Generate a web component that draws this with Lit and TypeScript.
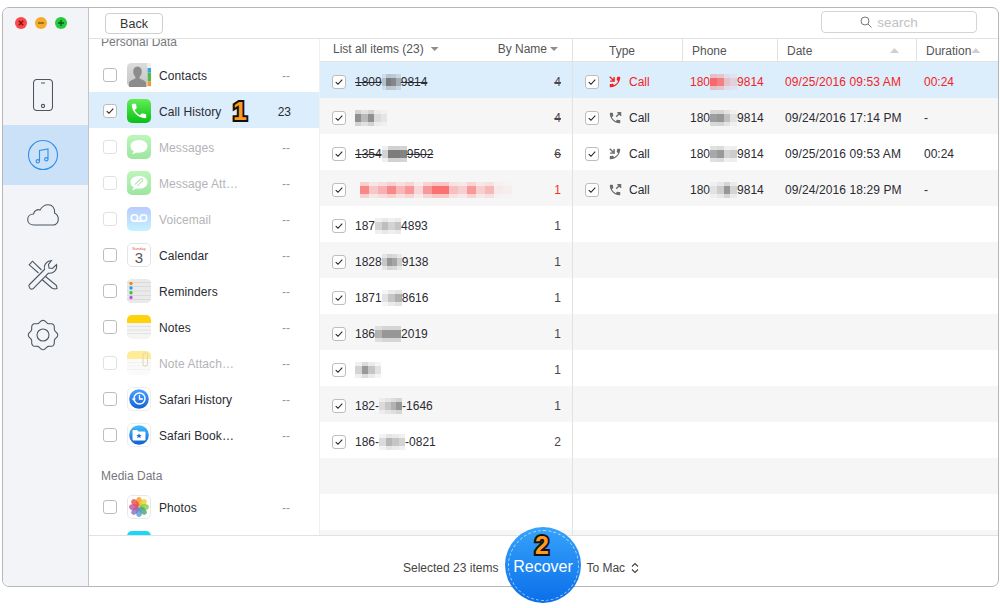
import { LitElement, html, css, svg } from "lit";
import { customElement } from "lit/decorators.js";

const HANDSET = "M6.6 10.8c1.4 2.8 3.8 5.1 6.6 6.6l2.2-2.2c.3-.3.7-.4 1-.2 1.1.4 2.3.6 3.6.6.6 0 1 .4 1 1V20c0 .6-.4 1-1 1C10.6 21 3 13.4 3 4c0-.6.4-1 1-1h3.5c.6 0 1 .4 1 1 0 1.3.2 2.5.6 3.6.1.3 0 .7-.2 1l-2.3 2.2z";

function gearPath() {
  const pts: string[] = [];
  for (let i = 0; i < 96; i++) {
    const t = (i / 96) * Math.PI * 2;
    const r = 13.6 + 1.1 * Math.cos(8 * t);
    pts.push(`${(16 + r * Math.sin(t)).toFixed(2)} ${(16 - r * Math.cos(t)).toFixed(2)}`);
  }
  return "M" + pts.join("L") + "Z";
}

const check = (on: boolean) => html`<span class="cb">${on
  ? html`<svg viewBox="0 0 14 14" width="12" height="12"><path d="M3.2 7.2 5.8 9.6 10.8 4.2" fill="none" stroke="#222" stroke-width="1.2"/></svg>`
  : ""}</span>`;

const blur = (w: number, cells: number[], rgb = "110,110,110") => {
  const cw = w / cells.length;
  return html`<span class="blur" style="width:${w}px">${cells.map(
    (v) => html`<i class="cell" style="width:${cw}px;background:linear-gradient(rgba(${rgb},${v * 0.35}) 0 25%,rgba(${rgb},${v}) 25% 75%,rgba(${rgb},${v * 0.35}) 75%)"></i>`
  )}</span>`;
};

const gloss = (id: string, a: string, b: string) => svg`<defs><linearGradient id=${id} x1="0" y1="0" x2="0" y2="1"><stop offset="0" stop-color=${a}/><stop offset="1" stop-color=${b}/></linearGradient></defs>`;

const bubble = svg`<path d="M12 5C7 5 3.5 7.8 3.5 11.3c0 2.1 1.3 3.9 3.2 5-.2 1-.8 2-1.7 2.7 1.7 0 3.2-.6 4.3-1.5.9.2 1.8.3 2.7.3 5 0 8.5-2.9 8.5-6.5S17 5 12 5z" fill="#fff"/>`;
const paper = svg`<rect width="24" height="24" rx="5" fill="#f4f4f4"/><path d="M0 11.5H24M0 15H24M0 18.5H24" stroke="#ddd" stroke-width=".8"/>`;

const appIcons: Record<string, any> = {
  contacts: svg`${gloss("c1", "#dcdcdc", "#c4c4c4")}<rect width="24" height="24" rx="4.5" fill="url(#c1)"/><rect x="20" y="0" width="4" height="24" fill="#eee"/><rect x="20.5" y="5" width="3.5" height="4.5" fill="#3aa3e0"/><rect x="20.5" y="9.5" width="3.5" height="4.5" fill="#57b84a"/><rect x="20.5" y="14" width="3.5" height="4.5" fill="#5ab55a"/><rect x="20.5" y="18.5" width="3.5" height="4.5" fill="#ee9a2c"/><path d="M10.5 3.5c2.8 0 4.3 2.2 4.3 4.9 0 2.3-1 4.3-2.2 5.3v1.6c0 .8 5.4 2 6.4 4.2v4.5H2v-4.5c1-2.2 6.4-3.4 6.4-4.2v-1.6C7.2 12.7 6.2 10.7 6.2 8.4c0-2.7 1.5-4.9 4.3-4.9z" fill="#8c8c8c"/>`,
  phone: svg`${gloss("p1", "#62ee55", "#0abf15")}<rect width="24" height="24" rx="5" fill="url(#p1)"/><g transform="translate(2.4 2.4) scale(.8)"><path d=${HANDSET} fill="#fff"/></g>`,
  msg: svg`${gloss("m1", "#66ea5c", "#17c421")}<rect width="24" height="24" rx="5" fill="url(#m1)"/>${bubble}`,
  att: svg`${gloss("m2", "#66ea5c", "#17c421")}<rect width="24" height="24" rx="5" fill="url(#m2)"/>${bubble}<path d="M9 14.5 14.5 9c1.5-1.2 3 .3 1.8 1.8l-5 5" transform="translate(-1 -1)" fill="none" stroke="#58c860" stroke-width="1.1"/>`,
  voice: svg`${gloss("v1", "#5a84ff", "#76e0ff")}<rect width="24" height="24" rx="5" fill="url(#v1)"/><circle cx="7.5" cy="11" r="3.2" fill="none" stroke="#fff" stroke-width="1.6"/><circle cx="16.5" cy="11" r="3.2" fill="none" stroke="#fff" stroke-width="1.6"/><path d="M7.5 14.2H16.5" stroke="#fff" stroke-width="1.6"/>`,
  cal: svg`<rect x=".5" y=".5" width="23" height="23" rx="4.5" fill="#fff" stroke="#e4e4e4"/><text x="12" y="6.5" text-anchor="middle" font-size="4" fill="#e4574c" font-family="Liberation Sans, sans-serif">Sunday</text><text x="12" y="20" text-anchor="middle" font-size="15" fill="#555" font-family="Liberation Sans, sans-serif">3</text>`,
  rem: svg`<rect width="24" height="24" rx="4.5" fill="#eaeaea"/><path d="M0 3.5H24M0 7.5H24M0 12H24M0 16.5H24M0 20.5H24" stroke="#d5d5d5" stroke-width=".8"/><circle cx="4" cy="4.5" r="1.7" fill="#f5871f"/><circle cx="4" cy="9" r="1.7" fill="#1f9df5"/><circle cx="4" cy="13.8" r="1.7" fill="#3fc43f"/><circle cx="4" cy="18.5" r="1.7" fill="#c04fe0"/>`,
  notes: svg`${paper}<path d="M0 8V5a5 5 0 0 1 5-5H19a5 5 0 0 1 5 5V8z" fill="#ffd20a"/>`,
  noteatt: svg`${paper}<path d="M0 8V5a5 5 0 0 1 5-5H19a5 5 0 0 1 5 5V8z" fill="#ffd20a"/><rect x="16" y="2" width="4.5" height="13" rx="2.2" fill="none" stroke="#c9a34a" stroke-width="1.1"/>`,
  safhist: svg`${gloss("s1", "#4aa2ff", "#1560d8")}<rect x=".5" y=".5" width="23" height="23" rx="4.5" fill="#fff" stroke="#eee"/><circle cx="12" cy="12" r="9.8" fill="url(#s1)"/><circle cx="12.5" cy="11.5" r="5.5" fill="none" stroke="#fff" stroke-width="1.4"/><path d="M12.5 8V12H16" fill="none" stroke="#fff" stroke-width="1.3"/><path d="M4.5 11.5 7 14 9 11.5z" fill="#fff"/>`,
  safbook: svg`${gloss("s2", "#45c1ff", "#0f5cd0")}<rect x=".5" y=".5" width="23" height="23" rx="4.5" fill="#fff" stroke="#eee"/><circle cx="12" cy="12" r="9.8" fill="url(#s2)"/><path d="M5.5 8a1 1 0 0 1 1-1H10l1.5 1.5h6a1 1 0 0 1 1 1V16.5a1 1 0 0 1-1 1h-11a1 1 0 0 1-1-1z" fill="#fff"/><path d="M12 10.2l.8 1.7 1.8.2-1.3 1.2.4 1.8-1.7-.9-1.7.9.4-1.8-1.3-1.2 1.8-.2z" fill="#1f6fd8"/>`,
  photos: svg`<rect x=".5" y=".5" width="23" height="23" rx="4.5" fill="#fff" stroke="#e8e8e8"/>${["#f5a11f", "#e8d22c", "#8fc94a", "#45ac6d", "#5b9bd6", "#8474c4", "#c2559e", "#e8504a"].map(
    (c, i) => svg`<ellipse cx="12" cy="6.7" rx="3" ry="4.7" fill=${c} fill-opacity=".82" transform="rotate(${i * 45} 12 12)"/>`
  )}`,
  cyan: svg`<rect width="24" height="24" rx="5" fill="#1cd6f8"/>`,
};

const icon = (k: string) => html`<svg class="app" viewBox="0 0 24 24" width="24" height="24">${appIcons[k]}</svg>`;

type Cat = { n: string; i: string; c?: string; off?: boolean; on?: boolean };
const CATS1: Cat[] = [
  { n: "Contacts", i: "contacts" },
  { n: "Call History", i: "phone", c: "23", on: true },
  { n: "Messages", i: "msg", off: true },
  { n: "Message Att…", i: "att", off: true },
  { n: "Voicemail", i: "voice", off: true },
  { n: "Calendar", i: "cal" },
  { n: "Reminders", i: "rem" },
  { n: "Notes", i: "notes" },
  { n: "Note Attach…", i: "noteatt", off: true },
  { n: "Safari History", i: "safhist" },
  { n: "Safari Book…", i: "safbook" },
];

type Item = { a?: string; b?: number; cells?: number[]; z?: string; n: string; strike?: boolean; red?: boolean; rgb?: string; lead?: number };
const ITEMS: Item[] = [
  { a: "1809", b: 19, cells: [0.35, 0.9, 0.8, 0.5], z: "9814", n: "4", strike: true },
  { b: 32, cells: [0.75, 0.45, 0.75, 0.2, 0.12], n: "4", strike: true },
  { a: "1354", b: 25, cells: [0.3, 0.9, 0.9, 0.85], z: "9502", n: "6", strike: true },
  { lead: 5, b: 152, cells: [0.7, 0.3, 0.45, 0.7, 0.4, 0.6, 0.2, 0.6, 0.85, 0.85, 0.35, 0.25, 0.6, 0.25, 0.4, 0.08, 0.05], n: "1", red: true, rgb: "250,90,90" },
  { a: "187", b: 26, cells: [0.3, 0.45, 0.3, 0.4], z: "4893", n: "1" },
  { a: "1828", b: 20, cells: [0.35, 0.7, 0.6, 0.3], z: "9138", n: "1" },
  { a: "1871", b: 20, cells: [0.2, 0.4, 0.55], z: "8616", n: "1" },
  { a: "186", b: 26, cells: [0.5, 0.7, 0.7, 0.7], z: "2019", n: "1" },
  { b: 26, cells: [0.3, 0.7, 0.4, 0.2], n: "1" },
  { a: "182-", b: 23, cells: [0.2, 0.35, 0.5, 0.7], z: "-1646", n: "1" },
  { a: "186-", b: 26, cells: [0.25, 0.5, 0.4, 0.3], z: "-0821", n: "2" },
];

const CALLS = [
  { dir: "in", p: ["180", 27, [0.9, 0.75, 0.3, 0.2], "9814"], d: "09/25/2016 09:53 AM", t: "00:24", red: true, rgb: "250,90,90" },
  { dir: "out", p: ["180", 27, [0.65, 0.7, 0.4, 0.15], "9814"], d: "09/24/2016 17:14 PM", t: "-" },
  { dir: "in", p: ["180", 27, [0.6, 0.7, 0.3, 0.35], "9814"], d: "09/25/2016 09:53 AM", t: "00:24" },
  { dir: "out", p: ["180", 27, [0.15, 0.3, 0.7, 0.25], "9814"], d: "09/24/2016 18:29 PM", t: "-" },
];

@customElement("app-root")
export class AppRoot extends LitElement {
  static styles = css`
    :host { display: block; width: 1000px; height: 608px; position: relative; background: #fff; overflow: hidden;
      font-family: "Liberation Sans", Arial, sans-serif; font-size: 12px; color: #2b2b33; }
    .window { position: absolute; left: 2px; top: 7px; width: 997px; height: 580px; box-sizing: border-box; border: 1px solid #b6b6b6;
      border-radius: 7px; display: flex; overflow: hidden; background: #fff; }
    .side { width: 86px; flex: none; box-sizing: border-box; background: #f2f4f8; border-right: 1px solid #c4c4c4; display: flex; flex-direction: column; }
    .lights { height: 57px; flex: none; display: flex; gap: 8px; padding: 9px 0 0 12px; box-sizing: border-box; }
    .lights svg { display: block; }
    .nav { height: 60px; flex: none; display: flex; align-items: center; justify-content: center; padding-right: 5px; }
    .nav.sel { background: #cbe1f7; }
    .nav svg { display: block; fill: none; stroke: #4d5660; stroke-width: 1.1; }
    .main { flex: 1; min-width: 0; display: flex; flex-direction: column; }
    .top { height: 31px; flex: none; box-sizing: border-box; border-bottom: 1px solid #e2e2e2; display: flex; align-items: flex-start; justify-content: space-between; padding: 2px 21px 0 16px; }
    .back { margin-top: 3px; width: 58px; height: 21px; box-sizing: border-box; border: 1px solid #cfcfcf; border-radius: 4px; font-size: 12.5px; display: flex; align-items: center; justify-content: center; color: #333; }
    .search { margin-top: 1px; width: 156px; height: 22px; box-sizing: border-box; border: 1px solid #d4d4d4; border-radius: 4px; display: flex; align-items: center; justify-content: center; gap: 5px; color: #c2c2c2; font-size: 13.5px; padding-right: 20px; }
    .body { flex: 1; min-height: 0; display: flex; }
    .cats { width: 231px; flex: none; box-sizing: border-box; border-right: 1px solid #f0f0f0; overflow: hidden; }
    .inner { margin-top: -19px; }
    .sec { height: 36px; box-sizing: border-box; padding: 15px 0 0 12px; color: #77777d; line-height: 14px; font-size: 12px; }
    .sec.media { padding-top: 17px; }
    .cat { height: 36px; box-sizing: border-box; padding-top: 2px; display: flex; align-items: center; padding-left: 14px; position: relative; }
    .cat.on { background: #dcedfb; margin-right: -1px; }
    .cat.off { color: #b4b4b8; }
    .cat.off .cb { opacity: .45; }
    .cat.off .app { opacity: .42; }
    .cb { width: 14px; height: 14px; flex: none; box-sizing: border-box; border: 1px solid #bdbdbd; border-radius: 3px; display: flex; align-items: center; justify-content: center; background: #fff; }
    .app { flex: none; display: block; margin: 0 8px 0 10px; }
    .lab { flex: 1; letter-spacing: .08px; padding-top: 2px; }
    .cnt { width: 28px; text-align: right; margin-right: 29px; color: #999; padding-top: 2px; }
    .cat.on .cnt { color: #2b2b33; }
    .step { position: absolute; color: #ff9a1f; font-weight: 700; font-family: "Liberation Sans", sans-serif; -webkit-text-stroke: 4px #111; paint-order: stroke fill; }
    .s1 { left: 144px; top: 6px; font-size: 25px; line-height: 26px; }
    .list { width: 253px; flex: none; box-sizing: border-box; border-right: 1px solid #e2e2e2; display: flex; flex-direction: column; overflow: hidden; }
    .lh { height: 23px; flex: none; box-sizing: border-box; border-bottom: 1px solid #e2e2e2; display: flex; align-items: center; padding: 0 14px 2px 13px; color: #555; justify-content: space-between; }
    .lh span { display: flex; align-items: center; gap: 5px; }
    .caret { width: 8px; height: 4px; background: #8e8e8e; clip-path: polygon(0 0, 100% 0, 50% 100%); display: block; }
    .up { width: 9px; height: 5px; background: #cfcfcf; clip-path: polygon(50% 0, 100% 100%, 0 100%); display: block; }
    .rows { flex: 1; min-height: 0; overflow: hidden; background-image: repeating-linear-gradient(#fff 0 36px, #f6f6f6 36px 72px); }
    .row { height: 36px; box-sizing: border-box; padding: 3px 11px 0 12px; display: flex; align-items: center; }
    .row:nth-child(even), .drow:nth-child(even) { background: #f6f6f6; }
    .row.sel, .drow.sel { background: #dcedfb; }
    .num { flex: 1; margin-left: 9px; white-space: nowrap; display: flex; align-items: center; position: relative; }
    .strike { text-decoration: line-through; }
    .blur { display: inline-flex; height: 16px; flex: none; }
    .cell { display: block; height: 16px; flex: none; }
    .lead { display: inline-block; flex: none; }
    .qty { color: #4a4347; }
    .qty.red { color: #f0341f; }
    .detail { flex: 1; min-width: 0; display: flex; flex-direction: column; }
    .dh { height: 23px; flex: none; box-sizing: border-box; border-bottom: 1px solid #e2e2e2; display: grid; grid-template-columns: 110px 95px 139px 1fr; color: #555; }
    .dh > div { border-right: 1px solid #e2e2e2; padding: 1px 17px 0 9px; display: flex; align-items: center; justify-content: space-between; }
    .dh > div:first-child { padding-left: 36px; }
    .dh > div:last-child { border-right: 0; padding-right: 18px; }
    .drow { height: 36px; box-sizing: border-box; padding-top: 3px; display: grid; grid-template-columns: 110px 95px 139px 1fr; align-items: center; }
    .drow.red { color: #f5231f; }
    .d1 { display: flex; align-items: center; padding-left: 12px; }
    .d1 > svg { margin: 0 7px 0 9px; display: block; flex: none; }
    .dc { padding-left: 7px; display: flex; align-items: center; white-space: nowrap; }
    .date { letter-spacing: .1px; }
    .foot { flex: none; box-sizing: border-box; border-top: 1px solid #e2e2e2; height: 51px; display: flex; align-items: center; padding: 14px 0 0 314px; color: #444; }
    .mac { margin-left: 88px; display: flex; align-items: center; gap: 6px; }
    .mac svg { display: block; }
    .recover { position: absolute; left: 505px; top: 527px; width: 76px; height: 76px; border-radius: 50%; background: linear-gradient(#36a3fb, #0b6ee9); color: #fff; font-size: 16px; display: flex; align-items: center; justify-content: center; padding-top: 3px; box-sizing: border-box; }
    .recover::before { content: ""; position: absolute; inset: 2.5px; border-radius: 50%; border: 1px dashed rgba(255,255,255,.65); }
    .s2 { left: 30px; top: 5px; font-size: 25px; line-height: 26px; }
  `;

  private num(i: Item) {
    return html`<span class="num ${i.strike ? "strike" : ""}">
      ${i.lead ? html`<span class="lead" style="width:${i.lead}px"></span>` : ""}
      ${i.a ?? ""}${i.cells ? blur(i.b!, i.cells, i.rgb) : ""}${i.z ?? ""}
    </span>`;
  }

  private cat(c: Cat) {
    return html`<div class="cat ${c.on ? "on" : ""} ${c.off ? "off" : ""}">
      ${check(!!c.on)}${icon(c.i)}<span class="lab">${c.n}</span><span class="cnt">${c.c ?? "--"}</span>
      ${c.on ? html`<span class="step s1">1</span>` : ""}
    </div>`;
  }

  render() {
    const gear = gearPath();
    return html`
      <div class="window">
        <div class="side">
          <div class="lights">
            <svg width="12" height="12" viewBox="0 0 12 12"><circle cx="6" cy="6" r="6" fill="#f9494a"/><path d="M3.8 3.8 8.2 8.2M8.2 3.8 3.8 8.2" stroke="#7c1414" stroke-width="1.4"/></svg>
            <svg width="12" height="12" viewBox="0 0 12 12"><circle cx="6" cy="6" r="6" fill="#f6ab2e"/><path d="M3 6H9" stroke="#8f5c0e" stroke-width="1.4"/></svg>
            <svg width="12" height="12" viewBox="0 0 12 12"><circle cx="6" cy="6" r="6" fill="#27c93f"/><path d="M3 6H9M6 3V9" stroke="#0d5f17" stroke-width="1.4"/></svg>
          </div>
          <div class="nav"><svg width="20" height="32" viewBox="0 0 20 32"><rect x=".5" y=".5" width="19" height="31" rx="3.5"/><path d="M8 4H12"/><circle cx="10" cy="27" r="1.6"/></svg></div>
          <div class="nav sel"><svg width="32" height="32" viewBox="0 0 32 32" style="stroke:#2f8ff0"><circle cx="16" cy="16" r="14.5"/><path d="M12.5 22V11.5L21 10V20"/><circle cx="10.8" cy="22.3" r="1.7"/><circle cx="19.3" cy="20.3" r="1.7"/></svg></div>
          <div class="nav"><svg width="32" height="22" viewBox="0 0 32 22"><path d="M7 21C3 21 .7 18.5 .7 15.5C.7 12 3.5 10 6.5 10C7.5 6.5 10.5 5 13 6C15 2.5 18 .7 21 .7C25.5 .7 28 4 27.5 9C29.5 10 31.3 12 31.3 15C31.3 18.5 29 21 26 21Z"/></svg></div>
          <div class="nav"><svg width="32" height="32" viewBox="0 0 32 32"><path d="M2.5 25.5 17.5 10.5C16.5 6.5 19 2 24.5 1.5L21.5 5.5 22 9 25.5 9.5 29.5 5.5C30.5 10 27 15 21.5 14.2L6.5 29.3C5.5 30.3 4 30.3 3 29.3L2.5 28.5C1.7 27.5 1.7 26.3 2.5 25.5Z"/><path d="M11.5 14 2.2 5.8 5.5 2.2 14.5 11"/><path d="M18.5 17.5 29.5 26.5 30 29.5 27.5 30 24.8 29 15 20.5"/></svg></div>
          <div class="nav"><svg width="32" height="32" viewBox="0 0 32 32"><path d=${gear}/><circle cx="16" cy="16" r="6"/></svg></div>
        </div>
        <div class="main">
          <div class="top">
            <div class="back">Back</div>
            <div class="search"><svg width="12" height="12" viewBox="0 0 12 12" fill="none" stroke="#777" stroke-width="1"><circle cx="5" cy="5" r="4"/><path d="M8 8 11.5 11.5"/></svg>search</div>
          </div>
          <div class="body">
            <div class="cats">
              <div class="inner">
                <div class="sec">Personal Data</div>
                ${CATS1.map((c) => this.cat(c))}
                <div class="sec media">Media Data</div>
                ${this.cat({ n: "Photos", i: "photos" })}
                ${this.cat({ n: "", i: "cyan", c: " " })}
              </div>
            </div>
            <div class="list">
              <div class="lh"><span>List all items (23)<i class="caret" style="margin-left:2px"></i></span><span style="gap:3px">By Name<i class="caret"></i></span></div>
              <div class="rows">
                ${ITEMS.map((i, k) => html`<div class="row ${k === 0 ? "sel" : ""}">
                  ${check(true)}${this.num(i)}
                  <span class="qty ${i.red ? "red" : ""} ${i.strike ? "strike" : ""}">${i.n}</span>
                </div>`)}
              </div>
            </div>
            <div class="detail">
              <div class="dh">
                <div>Type</div><div>Phone</div><div>Date<i class="up"></i></div>
                <div>Duration<i class="up"></i></div>
              </div>
              <div class="rows">
                ${CALLS.map((c, k) => html`<div class="drow ${c.red ? "red" : ""} ${k === 0 ? "sel" : ""}">
                  <div class="d1">${check(true)}
                    <svg width="14" height="14" viewBox="0 0 24 24" fill=${c.red ? "#f5231f" : "#6c6c6c"} stroke=${c.red ? "#f5231f" : "#6c6c6c"}>
                      ${c.dir === "out"
                        ? svg`<path d=${HANDSET} stroke="none"/><path d="M14 10 21 3M16 3H21.5V8.5" fill="none" stroke-width="2.4"/>`
                        : svg`<g transform="matrix(-1 0 0 1 24 0)"><path d=${HANDSET} stroke="none"/></g><path d="M3 3 9.5 9.5M3.5 10.5H10.5V3.5" fill="none" stroke-width="2.4"/>`}
                    </svg>
                    <span>Call</span>
                  </div>
                  <div class="dc">${c.p[0]}${blur(c.p[1] as number, c.p[2] as number[], c.rgb)}${c.p[3]}</div>
                  <div class="dc date">${c.d}</div>
                  <div class="dc">${c.t}</div>
                </div>`)}
              </div>
            </div>
          </div>
          <div class="foot">
            <span>Selected 23 items</span>
            <span class="mac">To Mac <svg width="8" height="12" viewBox="0 0 8 12" fill="none" stroke="#444" stroke-width="1.1"><path d="M1 4.5 4 1.5 7 4.5M1 7.5 4 10.5 7 7.5"/></svg></span>
          </div>
        </div>
      </div>
      <div class="recover">Recover<span class="step s2">2</span></div>
    `;
  }
}
